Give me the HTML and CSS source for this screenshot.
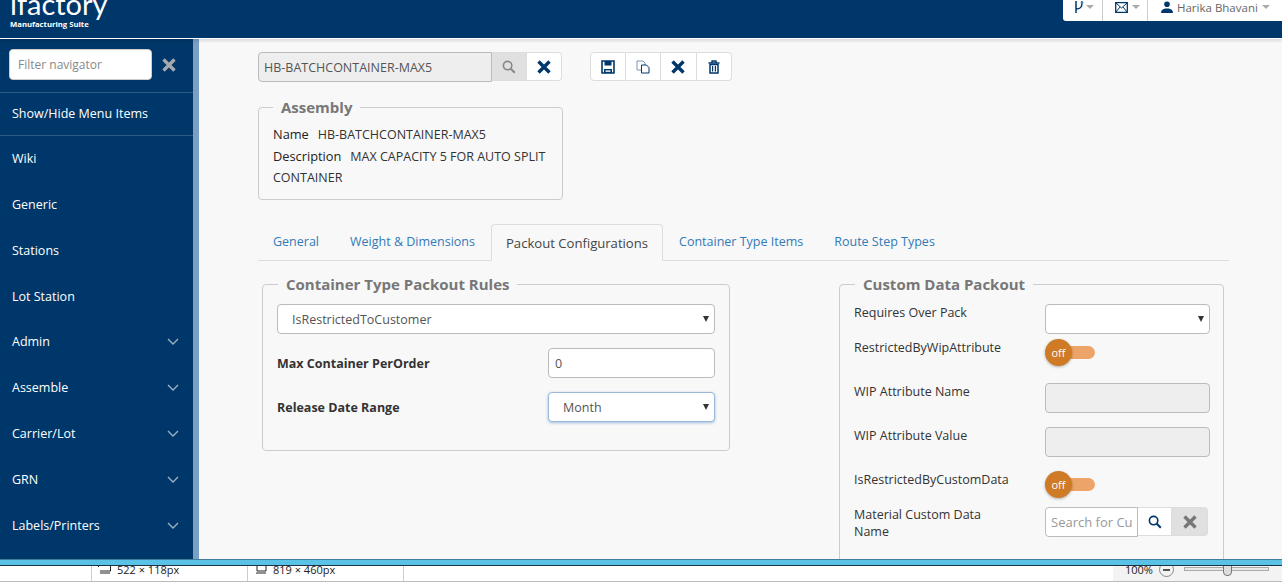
FILE: index.html
```html
<!DOCTYPE html>
<html lang="en">
<head>
  <meta charset="UTF-8" />
  <title>iFactory - Assembly</title>
  <link rel="stylesheet" href="styles.css">
</head>
<body>
  <svg class="defs" width="0" height="0">
    <symbol id="i-search" viewBox="0 0 14 14"><circle cx="5.6" cy="5.6" r="4.2" fill="none" stroke="currentColor" stroke-width="1.6"/><path d="M8.8 8.8l4 4" stroke="currentColor" stroke-width="2" fill="none"/></symbol>
    <symbol id="i-close" viewBox="0 0 14 14"><path d="M1.500 1.500l11 11M12.500 1.500l-11 11" stroke="currentColor" stroke-width="3.400" fill="none"/></symbol>
    <symbol id="i-save" viewBox="0 0 14 14"><path d="M1 1h12v12H1z" fill="none" stroke="currentColor" stroke-width="1.6"/><path d="M3.5 1h7v4.5h-7zM3 9h8v4H3z" fill="currentColor"/><path d="M4.5 10.4h5v1.4h-5z" fill="#fff"/></symbol>
    <symbol id="i-copy" viewBox="0 0 14 14"><path d="M1 1h6l2 2v7H1z" fill="#fff" stroke="#7d98b3" stroke-width="1"/><path d="M5.5 5h5l2.500 2.500V13h-7.500z" fill="#fff" stroke="currentColor" stroke-width="1"/></symbol>
    <symbol id="i-trash" viewBox="0 0 14 14"><path d="M1.500 3h11M5 2.500V1h4v1.500" stroke="currentColor" stroke-width="1.400" fill="none"/><path d="M3 4.500h8V13H3z" fill="none" stroke="currentColor" stroke-width="1.500"/><path d="M5.600 6v5.500M8.400 6v5.500" stroke="currentColor" stroke-width="1.200"/></symbol>
    <symbol id="i-chev" viewBox="0 0 12 7"><path d="M1 1l5 5 5-5" fill="none" stroke="currentColor" stroke-width="1.300"/></symbol>
  </svg>

  <div class="app">
    <header class="topbar">
      <div class="logo">
        <div class="logo-name">ifactory</div>
        <div class="logo-sub">Manufacturing Suite</div>
      </div>
      <div class="user-menu">
        <div class="user-cell cell-branch">
          <svg width="10" height="12" viewBox="0 0 10 12"><path d="M2 0v12M2 8c5 0 6-2 6-6" fill="none" stroke="#00376a" stroke-width="1.500"/><circle cx="8" cy="1.500" r="1.400" fill="#4a7fb0"/></svg>
          <span class="caret"></span>
        </div>
        <div class="user-cell cell-mail">
          <svg width="13" height="11" viewBox="0 0 13 11"><path d="M.7.700h11.600v9.600H.7z" fill="#fff" stroke="#00376a" stroke-width="1.300"/><path d="M1 1l5.500 5L12 1M1 10l4-5M12 10L8 5" fill="none" stroke="#00376a"/></svg>
          <span class="caret"></span>
        </div>
        <div class="user-cell cell-user">
          <svg width="12" height="12" viewBox="0 0 12 12"><circle cx="6" cy="3.200" r="2.800" fill="#00376a"/><path d="M0 12c0-3 2-4 4.500-4.500h3C10 8 12 9 12 12z" fill="#00376a"/></svg>
          <span>Harika Bhavani</span>
          <span class="caret"></span>
        </div>
      </div>
    </header>

    <div class="body-row">
      <nav class="sidebar">
        <div class="filter-row">
          <input class="filter-input" placeholder="Filter navigator">
          <svg class="filter-clear" width="14" height="14"><use href="#i-close"/></svg>
        </div>
        <div class="nav-toggle">Show/Hide Menu Items</div>
        <div class="nav-item">Wiki</div>
        <div class="nav-item">Generic</div>
        <div class="nav-item">Stations</div>
        <div class="nav-item">Lot Station</div>
        <div class="nav-item">Admin <svg width="12" height="7"><use href="#i-chev"/></svg></div>
        <div class="nav-item">Assemble <svg width="12" height="7"><use href="#i-chev"/></svg></div>
        <div class="nav-item">Carrier/Lot <svg width="12" height="7"><use href="#i-chev"/></svg></div>
        <div class="nav-item">GRN <svg width="12" height="7"><use href="#i-chev"/></svg></div>
        <div class="nav-item">Labels/Printers <svg width="12" height="7"><use href="#i-chev"/></svg></div>
      </nav>
      <div class="splitter"></div>

      <main class="content">
        <div class="toolbar">
          <div class="lookup">
            <input class="lookup-input" value="HB-BATCHCONTAINER-MAX5" disabled>
            <button class="btn btn-muted"><svg width="14" height="14"><use href="#i-search"/></svg></button>
            <button class="btn btn-end"><svg width="14" height="14"><use href="#i-close"/></svg></button>
          </div>
          <div class="actions">
            <button class="btn"><svg width="14" height="14"><use href="#i-save"/></svg></button>
            <button class="btn"><svg width="14" height="14"><use href="#i-copy"/></svg></button>
            <button class="btn"><svg width="14" height="14"><use href="#i-close"/></svg></button>
            <button class="btn"><svg width="14" height="14"><use href="#i-trash"/></svg></button>
          </div>
        </div>

        <fieldset class="panel assembly">
          <legend>Assembly</legend>
          <div><span class="key">Name</span>HB-BATCHCONTAINER-MAX5</div>
          <div><span class="key">Description</span>MAX CAPACITY 5 FOR AUTO SPLIT CONTAINER</div>
        </fieldset>

        <ul class="tabs">
          <li>General</li>
          <li>Weight &amp; Dimensions</li>
          <li class="active">Packout Configurations</li>
          <li>Container Type Items</li>
          <li>Route Step Types</li>
        </ul>

        <div class="tab-body">
          <fieldset class="panel rules">
            <legend>Container Type Packout Rules</legend>
            <div class="select-box">
              <select class="control pick"><option>IsRestrictedToCustomer</option></select>
            </div>
            <div class="rule-row">
              <label>Max Container PerOrder</label>
              <input class="control narrow" value="0">
            </div>
            <div class="rule-row">
              <label>Release Date Range</label>
              <div class="select-box narrow">
                <select class="control pick focused"><option>Month</option></select>
              </div>
            </div>
          </fieldset>

          <fieldset class="panel custom">
            <legend>Custom Data Packout</legend>
            <div class="cd-row h-35">
              <label>Requires Over Pack</label>
              <div class="select-box cd-control"><select class="control pick"><option></option></select></div>
            </div>
            <div class="cd-row h-44">
              <label>RestrictedByWipAttribute</label>
              <div class="switch"><span class="knob">off</span></div>
            </div>
            <div class="cd-row h-44">
              <label>WIP Attribute Name</label>
              <input class="control cd-control" disabled>
            </div>
            <div class="cd-row h-44">
              <label>WIP Attribute Value</label>
              <input class="control cd-control" disabled>
            </div>
            <div class="cd-row h-36">
              <label>IsRestrictedByCustomData</label>
              <div class="switch"><span class="knob">off</span></div>
            </div>
            <div class="cd-row">
              <label class="wrap">Material Custom Data Name</label>
              <div class="cd-search">
                <input class="control cd-search-input" placeholder="Search for Custom Data">
                <button class="btn cd-go"><svg width="14" height="14"><use href="#i-search"/></svg></button>
                <button class="btn btn-muted cd-x"><svg width="14" height="14"><use href="#i-close"/></svg></button>
              </div>
            </div>
          </fieldset>
        </div>
      </main>
    </div>

    <div class="taskbar"></div>
    <div class="statusbar">
      <div class="stat stat-first"></div>
      <div class="stat stat-size">
        <svg width="13" height="13" viewBox="0 0 13 13"><path d="M.5 0v2M12.500 0v6H2M2 8h10" fill="none" stroke="#222"/></svg>
        522 × 118px
      </div>
      <div class="stat stat-size">
        <svg width="13" height="13" viewBox="0 0 13 13"><path d="M0 .5h1M3 0v6h9V0M2 8h10" fill="none" stroke="#222"/></svg>
        819 × 460px
      </div>
      <div class="stat-fill"></div>
      <div class="zoom">
        <span>100%</span>
        <span class="zoom-minus"></span>
        <span class="zoom-track"><span class="zoom-thumb"></span></span>
      </div>
    </div>
  </div>
</body>
</html>
```

FILE: styles.css
```css
* {
  box-sizing: border-box;
}

html, body {
  margin: 0;
  height: 582px;
  overflow: hidden;
}

body {
  background: #f8f8f8;
  font-family: 'Open Sans', 'Liberation Sans', sans-serif;
  font-size: 12.500px;
  color: #333;
}

.defs {
  display: block;
  height: 0;
}

.app {
  display: flex;
  flex-direction: column;
  height: 582px;
}

/* top bar */
.topbar {
  flex: 0 0 39px;
  display: flex;
  justify-content: space-between;
  background: #00376a;
  border-bottom: 1px solid #fff;
  box-shadow: 0 2px 3px rgba(0,0,0,0.12);
  overflow: hidden;
  position: relative;
  z-index: 2;
}

.logo {
  padding-left: 10px;
  color: #fff;
  height: 38px;
}

.logo-name {
  font-family: 'Lato', 'Open Sans', sans-serif;
  font-size: 29px;
  line-height: 33px;
  margin-top: -13px;
  height: 32px;
}

.logo-sub {
  font-size: 7.700px;
  font-weight: 700;
  line-height: 10px;
}

.user-menu {
  display: flex;
  height: 21px;
  background: #fff;
  border-bottom-left-radius: 3px;
  color: #666;
  font-size: 11.500px;
}

.user-cell {
  display: flex;
  align-items: center;
  gap: 4px;
  padding-bottom: 7px;
  height: 21px;
  border-right: 1px solid #ccc;
}

.cell-branch { width: 40px; padding-left: 11px; gap: 2px; }
.cell-mail { width: 45px; padding-left: 12px; }
.cell-user { width: 134px; padding-left: 13px; border-right: 0; }

.caret {
  width: 0;
  height: 0;
  border-left: 4px solid transparent;
  border-right: 4px solid transparent;
  border-top: 4px solid #aaa;
}

/* sidebar */
.body-row {
  flex: 1;
  display: flex;
  min-height: 0;
}

.sidebar {
  flex: 0 0 193px;
  background: #00376a;
  color: #fff;
  overflow: hidden;
}

.splitter {
  flex: 0 0 6px;
  background: #7a9fc3;
}

.filter-row {
  display: flex;
  align-items: center;
  gap: 10px;
  height: 54px;
  padding: 0 9px 2px;
  border-bottom: 1px solid #2b5a85;
}

.filter-input {
  width: 143px;
  height: 31px;
  padding: 0 8px;
  border: 1px solid #ccc;
  border-radius: 4px;
  font-family: inherit;
  font-size: 12px;
}

.filter-input::placeholder {
  color: #888;
}

.filter-clear {
  color: #a5a9ad;
}

.nav-toggle {
  display: flex;
  align-items: center;
  height: 42.800px;
  padding-left: 12px;
  border-bottom: 1px solid #2b5a85;
}

.nav-item {
  display: flex;
  align-items: center;
  justify-content: space-between;
  height: 45.800px;
  padding: 0 14px 0 12px;
}

.nav-item svg {
  color: #9fb3c7;
}

/* main content */
.content {
  flex: 1;
  padding: 13px 53px 0 59px;
  overflow: hidden;
  min-width: 0;
}

.toolbar {
  display: flex;
  gap: 28px;
  height: 30px;
}

.lookup, .actions {
  display: flex;
  height: 29px;
}

.lookup-input {
  width: 234px;
  height: 30px;
  padding: 0 5px;
  border: 1px solid #bbb;
  border-radius: 4px 0 0 4px;
  background: #eee;
  color: #555;
  font-family: inherit;
  font-size: 12.500px;
}

.btn {
  display: flex;
  align-items: center;
  justify-content: center;
  width: 35.500px;
  height: 29px;
  padding: 0;
  background: #fff;
  border: 1px solid #ddd;
  border-left-width: 0;
  color: #00376a;
}

.lookup .btn {
  width: 35px;
}

.actions .btn:first-child {
  border-left-width: 1px;
  border-radius: 4px 0 0 4px;
}

.actions .btn:last-child, .btn-end {
  border-radius: 0 4px 4px 0;
}

.btn-muted {
  background: #e0e0e0;
  color: #888;
}

.panel {
  margin: 0;
  padding: 0;
  border: 1px solid #ccc;
  border-radius: 4px;
  min-width: 0;
}

.panel legend {
  padding: 0 8px;
  font-size: 15px;
  font-weight: 700;
  line-height: 20px;
  color: #777;
}

.rules legend, .custom legend {
  margin-left: 1px;
}

.assembly {
  width: 305px;
  height: 103px;
  margin-top: 15px;
  padding: 7px 14px 0;
  line-height: 21.500px;
}

.key {
  margin-right: 9px;
  color: #222;
  font-size: 12.800px;
}

.tabs {
  display: flex;
  margin: 24px 0 0;
  padding: 0;
  list-style: none;
  height: 37px;
  border-bottom: 1px solid #ddd;
}

.tabs li {
  height: 37px;
  padding: 9px 15px 0;
  margin-right: 1px;
  color: #337ab7;
  line-height: 18px;
}

.tabs li.active {
  padding: 9px 14px 0;
  background: #f8f8f8;
  border: 1px solid #ddd;
  border-bottom-color: #f8f8f8;
  border-radius: 4px 4px 0 0;
  color: #444;
  font-size: 13.100px;
}

.tab-body {
  display: flex;
  justify-content: space-between;
  align-items: flex-start;
  margin-top: 13px;
  padding: 0 5px 0 4px;
}

.rules {
  width: 468px;
  height: 177px;
  padding: 10px 14px 0;
}

.control {
  display: block;
  height: 30px;
  width: 100%;
  padding: 0 6px;
  background: #fff;
  border: 1px solid #bbb;
  border-radius: 4px;
  font-family: inherit;
  font-size: 12.500px;
  color: #555;
}

.control:disabled {
  background: #eee;
}

.pick {
  padding-left: 14px;
  appearance: none;
}

.focused {
  border-color: #9ab8da;
  box-shadow: 0 1px 3px rgba(102,150,210,0.6);
}

.select-box {
  position: relative;
}

.select-box::after {
  content: "";
  position: absolute;
  top: 12px;
  right: 6px;
  border-left: 3.500px solid transparent;
  border-right: 3.500px solid transparent;
  border-top: 6px solid #333;
}

.narrow {
  flex: 0 0 167px;
  width: 167px;
}

.rule-row {
  display: flex;
  align-items: center;
  justify-content: space-between;
  height: 30px;
  margin-top: 14px;
}

.rule-row label {
  font-weight: 700;
  color: #333;
}

.custom {
  width: 385px;
  height: 300px;
  padding: 10px 13px 0 14px;
}

.cd-row {
  display: flex;
  align-items: flex-start;
}

.h-35 { height: 35px; }
.h-44 { height: 44px; }
.h-36 { height: 36px; }

.cd-row label {
  flex: 0 0 191px;
  line-height: 18px;
  color: #333;
}

.cd-row label.wrap {
  flex-basis: 160px;
  margin-right: 31px;
  margin-top: -1px;
  line-height: 17px;
}

.cd-control {
  width: 165px;
}

.switch {
  position: relative;
  display: flex;
  align-items: center;
  width: 50px;
  height: 27px;
}

.switch::before {
  content: "";
  position: absolute;
  top: 7px;
  left: 10px;
  width: 40px;
  height: 13px;
  background: #eda468;
  border-radius: 7px;
}

.knob {
  position: relative;
  display: flex;
  align-items: center;
  justify-content: center;
  width: 27px;
  height: 27px;
  background: #cf7a25;
  border-radius: 50%;
  box-shadow: 0 1px 3px rgba(0,0,0,0.3);
  color: #fff;
  font-size: 11px;
}

.cd-search {
  display: flex;
}

.cd-search-input {
  width: 93px;
  padding: 0 5px;
  border-radius: 4px 0 0 4px;
  font-size: 13px;
}

.cd-search-input::placeholder {
  color: #999;
}

.cd-go {
  width: 34px;
}

.cd-x {
  width: 36px;
  color: #777;
  border-radius: 0 4px 4px 0;
}

/* bottom of the window */
.taskbar {
  flex: 0 0 7px;
  background: #5bc2e7;
  border-top: 1px solid #3f7f9c;
  border-bottom: 1px solid #1d3345;
}

.statusbar {
  flex: 0 0 16px;
  display: flex;
  background: #fff;
  border-bottom: 1px solid #bbb;
  font-size: 11px;
  line-height: 8px;
  color: #222;
  overflow: hidden;
}

.stat {
  display: flex;
  gap: 6px;
  border-right: 1px solid #ccc;
}

.stat-first {
  width: 92px;
}

.stat-size {
  width: 156px;
  padding-left: 6px;
  margin-top: -3px;
  padding-top: 3px;
  height: 19px;
}

.stat-size svg {
  margin-top: -1px;
}

.stat-fill {
  flex: 1;
}

.zoom {
  display: flex;
  width: 169px;
  gap: 6px;
  padding-left: 12px;
  background: #f3f3f3;
}

.zoom-minus {
  width: 15px;
  height: 15px;
  margin-top: -4px;
  border: 1px solid #888;
  border-radius: 50%;
  background: linear-gradient(#555, #555) center / 7px 2px no-repeat;
}

.zoom-track {
  position: relative;
  width: 85px;
  height: 4px;
  margin: 1px 0 0 4px;
  background: #e8e8e8;
  border: 1px solid #aaa;
}

.zoom-thumb {
  position: absolute;
  top: -3px;
  left: 38px;
  width: 9px;
  height: 11px;
  background: #ddd;
  border: 1px solid #777;
  border-radius: 0 0 4px 4px;
}
```
